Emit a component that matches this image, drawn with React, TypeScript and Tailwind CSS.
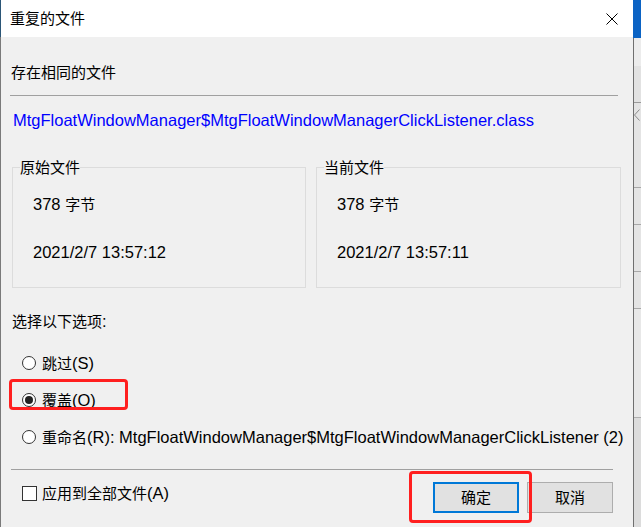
import React from "react";

const T = ({ s }: { s: string }) => {
  const parts = s.split(/([\u3000-\u9fff\uff00-\uffef]+)/).filter((p) => p.length > 0);
  return (
    <>
      {parts.map((p, i) =>
        /[\u3000-\u9fff\uff00-\uffef]/.test(p) ? (
          <span key={i} className="text-[15px]">
            {p}
          </span>
        ) : (
          <span key={i}>{p}</span>
        )
      )}
    </>
  );
};

const Radio = ({ checked }: { checked?: boolean }) => (
  <span className="w-[14px] h-[14px] rounded-full border border-[#333333] bg-white flex items-center justify-center shrink-0">
    {checked && <span className="w-[8px] h-[8px] rounded-full bg-[#222222]" />}
  </span>
);

export default function App() {
  return (
    <div className="relative w-[641px] h-[527px] flex overflow-hidden font-['Liberation_Sans','Noto_Sans_CJK_SC',sans-serif] text-[16.5px] text-black">
      {/* dialog */}
      <div className="w-[633px] h-full flex flex-col">
        <div className="h-[37px] bg-white border-l border-[#2b5677] flex items-center justify-between pl-[9px] pr-[15px]">
          <span className="leading-[22px]">
            <T s="重复的文件" />
          </span>
          <svg width="12" height="12" viewBox="0 0 12 12" className="block">
            <path d="M0.5 0.5 L11.5 11.5 M11.5 0.5 L0.5 11.5" stroke="#000" strokeWidth="1" fill="none" />
          </svg>
        </div>
        <div className="flex-1 bg-[#f0f0f0] border-l border-[#7a7a7a] flex flex-col">
          <div className="mt-[24px] h-[22px] leading-[22px] pl-[10px]">
            <T s="存在相同的文件" />
          </div>
          <div className="mt-[12px] ml-[9px] w-[608px] h-px bg-[#a0a0a0]" />
          <div className="mt-[13px] h-[22px] leading-[22px] pl-[12px] text-[#0000ff] whitespace-nowrap">
            MtgFloatWindowManager$MtgFloatWindowManagerClickListener.class
          </div>
          <div className="mt-[25px] flex pl-[11px] gap-[10px]">
            <fieldset className="w-[294px] h-[132px] border border-[#dcdcdc] px-[7px]">
              <legend className="h-[22px] leading-[22px]">
                <T s="原始文件" />
              </legend>
              <div className="mt-[15px] h-[22px] leading-[22px] pl-[13px]">
                <T s="378 字节" />
              </div>
              <div className="mt-[26px] h-[22px] leading-[22px] pl-[13px]">2021/2/7 13:57:12</div>
            </fieldset>
            <fieldset className="w-[305px] h-[132px] border border-[#dcdcdc] px-[7px]">
              <legend className="h-[22px] leading-[22px]">
                <T s="当前文件" />
              </legend>
              <div className="mt-[15px] h-[22px] leading-[22px] pl-[13px]">
                <T s="378 字节" />
              </div>
              <div className="mt-[26px] h-[22px] leading-[22px] pl-[13px]">2021/2/7 13:57:11</div>
            </fieldset>
          </div>
          <div className="mt-[22px] h-[22px] leading-[22px] pl-[11px]">
            <T s="选择以下选项:" />
          </div>
          <div className="mt-[20px] h-[22px] flex items-center pl-[21px] gap-[6px]">
            <Radio />
            <span className="leading-[22px]">
              <T s="跳过(S)" />
            </span>
          </div>
          <div className="mt-[15px] h-[22px] flex items-center pl-[21px] gap-[6px]">
            <Radio checked />
            <span className="leading-[22px]">
              <T s="覆盖(O)" />
            </span>
          </div>
          <div className="mt-[15px] h-[22px] flex items-center pl-[21px] gap-[6px]">
            <Radio />
            <span className="leading-[22px] whitespace-nowrap">
              <T s="重命名(R): MtgFloatWindowManager$MtgFloatWindowManagerClickListener (2)" />
            </span>
          </div>
          <div className="mt-[21px] ml-[10px] w-[602px] h-px bg-[#a0a0a0]" />
          <div className="mt-[12px] flex items-start pl-[21px] pr-[20px]">
            <div className="h-[22px] flex items-center gap-[5px]">
              <span className="w-[15px] h-[15px] border border-[#333333] bg-white shrink-0" />
              <span className="leading-[22px]">
                <T s="应用到全部文件(A)" />
              </span>
            </div>
            <div className="ml-auto flex gap-[8px]">
              <button className="w-[86px] h-[31px] bg-[#e1e1e1] border-2 border-[#0078d7] flex items-center justify-center leading-none">
                <T s="确定" />
              </button>
              <button className="w-[86px] h-[31px] bg-[#e1e1e1] border border-[#adadad] flex items-center justify-center leading-none">
                <T s="取消" />
              </button>
            </div>
          </div>
        </div>
      </div>
      {/* window behind */}
      <div className="w-[8px] h-full flex flex-col">
        <div className="h-[38px] bg-[#0b63c4]" />
        <div className="flex-1 border-l border-[#6f6f6f] bg-[#e4e4e4] flex flex-col">
          <div className="h-[28px] bg-[#ececec]" />
          <div className="h-[37px] bg-[#e2e2e2] border-b border-[#9a9a9a]" />
          <div className="h-[24px] flex items-center">
            <svg width="6" height="12" viewBox="0 0 6 12">
              <path d="M5.5 0.5 L0.5 6 L5.5 11.5" stroke="#8a8a8a" fill="none" />
            </svg>
          </div>
          <div className="h-[61px] border-b border-[#a8a8a8]" />
          <div className="h-[37px] border-b border-[#a8a8a8]" />
          <div className="h-[47px] border-b border-[#a8a8a8]" />
          <div className="h-[37px] border-b border-[#a8a8a8]" />
          <div className="h-[109px] border-b border-[#b0b0b0] bg-[#e8e8e8]" />
          <div className="flex-1 bg-[#dcdcdc]" />
        </div>
      </div>
      {/* red annotation boxes */}
      <div className="absolute left-[9px] top-[379px] w-[119px] h-[31px] border-[3px] border-[#ff1f1f] rounded-[4px]" />
      <div className="absolute left-[409px] top-[471px] w-[123px] h-[52px] border-[3px] border-[#ff1f1f] rounded-[4px]" />
    </div>
  );
}
